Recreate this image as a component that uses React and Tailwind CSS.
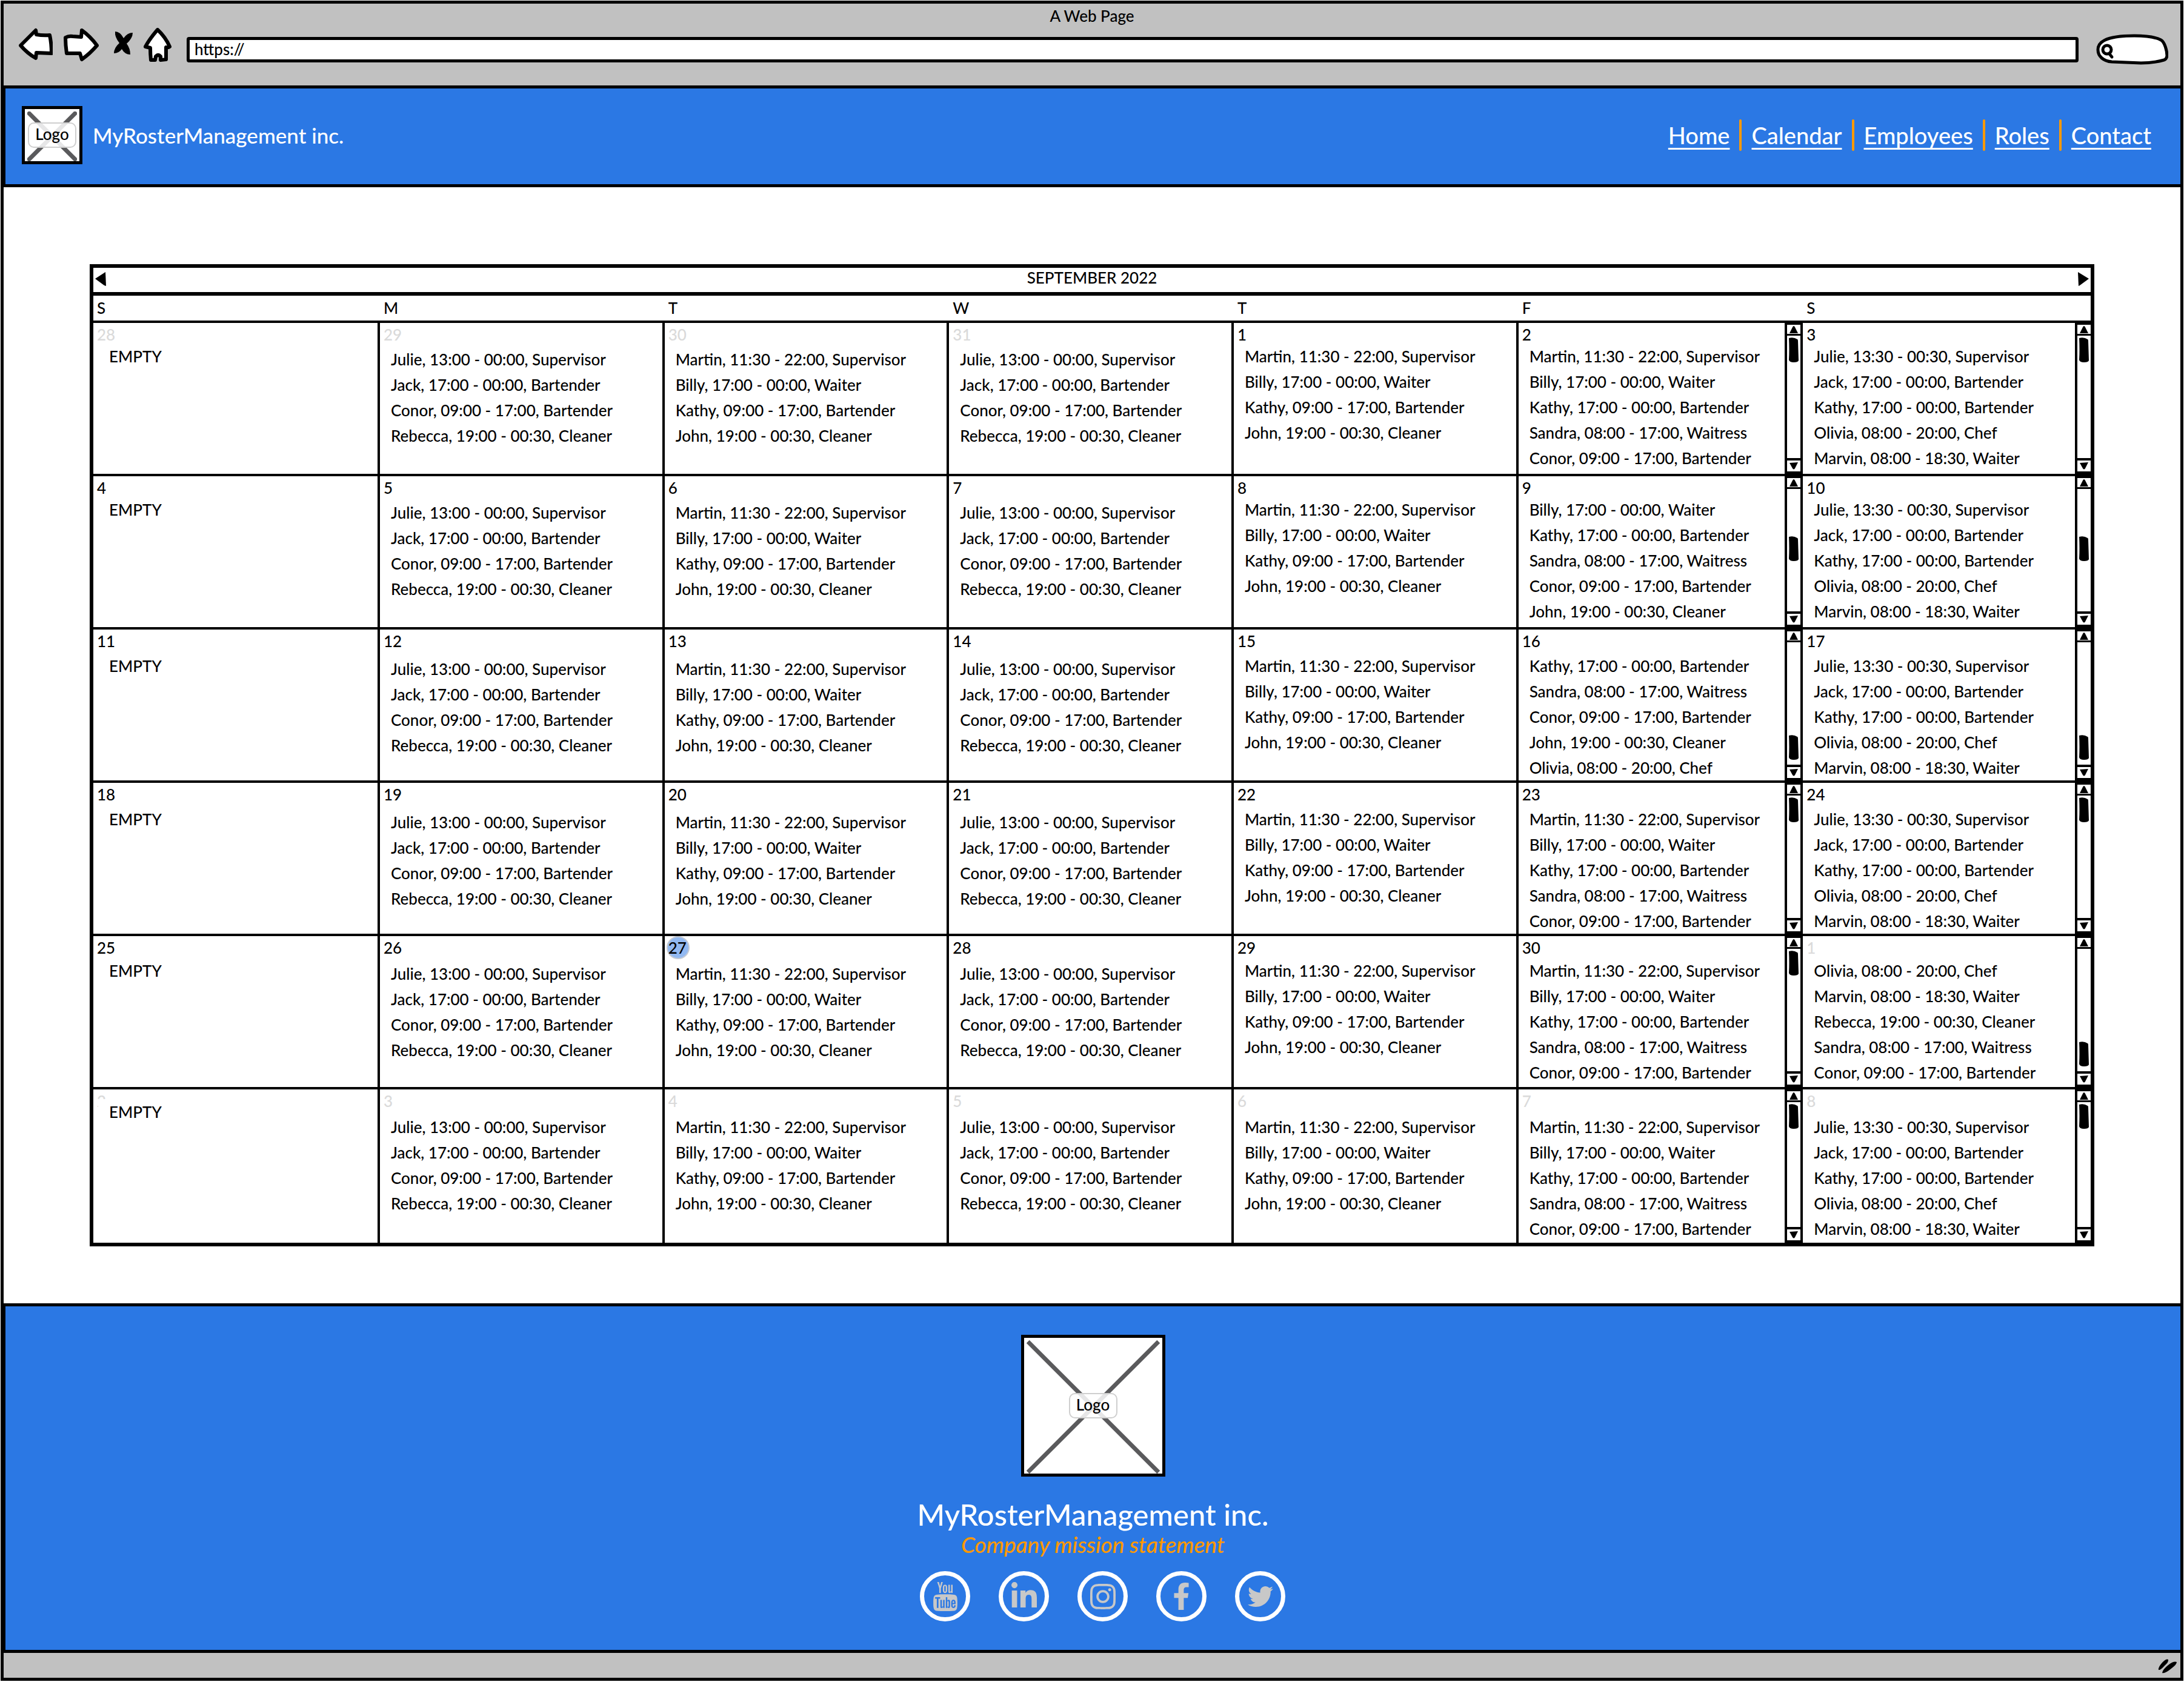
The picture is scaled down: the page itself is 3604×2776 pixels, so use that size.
import { FaFacebookF, FaInstagram, FaLinkedinIn, FaTwitter } from "react-icons/fa";
import { TfiYoutube } from "react-icons/tfi";

const JULIE_EARLY = "Julie, 13:00 - 00:00, Supervisor";
const JULIE_LATE = "Julie, 13:30 - 00:30, Supervisor";
const JACK = "Jack, 17:00 - 00:00, Bartender";
const CONOR = "Conor, 09:00 - 17:00, Bartender";
const REBECCA = "Rebecca, 19:00 - 00:30, Cleaner";
const MARTIN = "Martin, 11:30 - 22:00, Supervisor";
const BILLY = "Billy, 17:00 - 00:00, Waiter";
const KATHY_DAY = "Kathy, 09:00 - 17:00, Bartender";
const KATHY_NIGHT = "Kathy, 17:00 - 00:00, Bartender";
const JOHN = "John, 19:00 - 00:30, Cleaner";
const SANDRA = "Sandra, 08:00 - 17:00, Waitress";
const OLIVIA = "Olivia, 08:00 - 20:00, Chef";
const MARVIN = "Marvin, 08:00 - 18:30, Waiter";

const TEAM_A = [JULIE_EARLY, JACK, CONOR, REBECCA];
const TEAM_B = [MARTIN, BILLY, KATHY_DAY, JOHN];
const FRIDAY = [MARTIN, BILLY, KATHY_NIGHT, SANDRA, CONOR];
const SATURDAY = [JULIE_LATE, JACK, KATHY_NIGHT, OLIVIA, MARVIN];

const week = (days, muted, friday, fridayThumb, saturday, saturdayThumb) =>
  [
    { shifts: null },
    { shifts: TEAM_A, low: true },
    { shifts: TEAM_B, low: true },
    { shifts: TEAM_A, low: true },
    { shifts: TEAM_B },
    { shifts: friday, thumb: fridayThumb },
    { shifts: saturday, thumb: saturdayThumb },
  ].map((d, i) => ({ ...d, n: days[i], muted: muted.includes(i) }));

const WEEKS = [
  { pad: "mt-[34px]", days: week([28, 29, 30, 31, 1, 2, 3], [0, 1, 2, 3], FRIDAY, "start", SATURDAY, "start") },
  {
    pad: "mt-[34px]",
    days: week([4, 5, 6, 7, 8, 9, 10], [], [BILLY, KATHY_NIGHT, SANDRA, CONOR, JOHN], "middle", SATURDAY, "middle"),
  },
  {
    pad: "mt-[39px]",
    days: week([11, 12, 13, 14, 15, 16, 17], [], [KATHY_NIGHT, SANDRA, CONOR, JOHN, OLIVIA], "end", SATURDAY, "end"),
  },
  { pad: "mt-[39px]", days: week([18, 19, 20, 21, 22, 23, 24], [], FRIDAY, "start", SATURDAY, "start") },
  {
    pad: "mt-[36px]",
    days: week([25, 26, 27, 28, 29, 30, 1], [6], FRIDAY, "start", [OLIVIA, MARVIN, REBECCA, SANDRA, CONOR], "end"),
  },
  {
    pad: "mt-[41px]",
    emptyPad: "mt-4",
    level: true,
    days: week([2, 3, 4, 5, 6, 7, 8], [0, 1, 2, 3, 4, 5, 6], FRIDAY, "start", SATURDAY, "start"),
  },
];

const THUMB = { start: "justify-start", middle: "justify-center", end: "justify-end" };

function Scrollbar({ thumb }) {
  return (
    <div className="flex w-[26px] shrink-0 flex-col border-l-4 border-black">
      <button type="button" aria-label="Scroll up" className="flex h-[21px] items-center justify-center border-y-3 border-black">
        <svg viewBox="0 0 16 12" className="h-3 w-4">
          <path d="M8 0 Q9 0 10 2 L15 12 L1 12 L6 2 Q7 0 8 0Z" />
        </svg>
      </button>
      <div className={`flex grow flex-col items-center pt-[3px] pb-2 ${THUMB[thumb]}`}>
        <svg viewBox="0 0 16 41" className="h-[41px] w-4">
          <path d="M0 1 Q8 -1 14 3 Q15 3 15 6 L16 38 Q15 41 8 41 Q1 41 0 37 Q1 20 0 1Z" />
        </svg>
      </div>
      <button type="button" aria-label="Scroll down" className="flex h-[26px] items-center justify-center border-y-4 border-black">
        <svg viewBox="0 0 16 12" className="h-3 w-4">
          <path d="M1 1 L15 0 L10 10 Q8 13 6 10Z" />
        </svg>
      </button>
    </div>
  );
}

function Day({ day, week }) {
  return (
    <td className="border-r-4 border-b-4 border-black p-0 align-top group-last:border-b-0 last:border-r-0">
      <div className="flex min-h-[249px] justify-between group-last:min-h-[253px]">
        <div className="relative grow">
          <div className={`absolute top-1 left-[6px] leading-[30px] ${day.muted ? "text-[#dadada]" : ""}`}>
            {day.n === 27 && (
              <span className="absolute -top-1 -left-[3px] size-[38px] rounded-full border-2 border-[#c4cad4] bg-[#92b9f1]" />
            )}
            <span className="relative">{day.n}</span>
          </div>
          {day.shifts ? (
            <ul className={`relative pl-[18px] whitespace-nowrap ${week.pad}`}>
              {day.low && !week.level && <li aria-hidden="true" className="h-[5px]" />}
              {day.shifts.map((s) => (
                <li key={s} className="leading-[42px]">
                  {s}
                </li>
              ))}
            </ul>
          ) : (
            <p className={`relative ml-2 w-32 bg-white pl-[18px] leading-[42px] ${week.emptyPad ?? week.pad}`}>EMPTY</p>
          )}
        </div>
        {day.thumb && <Scrollbar thumb={day.thumb} />}
      </div>
    </td>
  );
}

function Calendar() {
  return (
    <section className="mx-[142px] border-6 border-black bg-white">
      <div className="flex h-[46px] items-center justify-between border-b-6 border-black px-[3px] pb-1">
        <button type="button" aria-label="Previous month">
          <svg viewBox="0 0 18 23" className="h-[23px] w-[18px]">
            <path d="M0 11 L17 0 L18 23 L15 22Z" />
          </svg>
        </button>
        <h2 className="pb-1 font-medium">SEPTEMBER 2022</h2>
        <button type="button" aria-label="Next month">
          <svg viewBox="0 0 18 23" className="h-[23px] w-[18px]">
            <path d="M18 11 L0 0 L1 23 L3 22Z" />
          </svg>
        </button>
      </div>
      <table className="w-full table-fixed border-separate border-spacing-0">
        <colgroup>
          <col className="w-[14.35%]" />
          <col className="w-[14.25%]" />
          <col className="w-[14.25%]" />
          <col className="w-[14.25%]" />
          <col className="w-[14.25%]" />
          <col className="w-[14.25%]" />
          <col />
        </colgroup>
        <thead>
          <tr>
            {["S", "M", "T", "W", "T", "F", "S"].map((d, i) => (
              <th key={i} scope="col" className="h-[45px] border-b-4 border-black pt-0 pb-[2px] pl-[6px] text-left font-medium">
                {d}
              </th>
            ))}
          </tr>
        </thead>
        <tbody>
          {WEEKS.map((w, i) => (
            <tr key={i} className="group">
              {w.days.map((d, j) => (
                <Day key={j} day={d} week={w} />
              ))}
            </tr>
          ))}
        </tbody>
      </table>
    </section>
  );
}

function Logo({ className }) {
  return (
    <div className={`relative flex items-center justify-center border-5 border-black bg-white ${className}`}>
      <svg viewBox="0 0 100 100" preserveAspectRatio="none" className="absolute inset-1 text-[#5a5a5c]">
        <path d="M1 1 L99 99 M99 1 L1 99" stroke="currentColor" strokeWidth="7" vectorEffect="non-scaling-stroke" />
      </svg>
      <span className="relative flex h-[42px] w-20 items-center justify-center rounded-[10px] border-2 border-[#cfcfcf] bg-white/85 pb-1">
        Logo
      </span>
    </div>
  );
}

function BrowserBar() {
  return (
    <header className="border-b-5 border-black bg-[#c1c1c1]">
      <p className="h-10 text-center leading-[40px]">A Web Page</p>
      <div className="flex h-[95px] items-start pr-[20px] pl-[25px]">
        <div className="flex gap-[18px]">
          <button type="button" aria-label="Back">
            <svg viewBox="0 0 56 56" className="size-14" fill="white" stroke="black" strokeWidth="6" strokeLinejoin="round">
              <path d="M3 29 L28 4 L29 11 Q40 13 51 12 Q54 26 54 42 L29 41 L28 50 Q14 42 3 29Z" />
            </svg>
          </button>
          <button type="button" aria-label="Forward">
            <svg viewBox="0 0 58 56" className="h-14 w-[58px]" fill="white" stroke="black" strokeWidth="6" strokeLinejoin="round">
              <path d="M3 16 Q8 13 15 14 L29 15 L30 4 Q44 14 55 29 Q44 42 30 52 L27 42 L5 42 Q3 28 3 16Z" />
            </svg>
          </button>
          <button type="button" aria-label="Stop">
            <svg viewBox="0 0 38 56" className="h-14 w-[38px]">
              <path d="M9 6 Q17 6 23 17 Q29 8 38 8 Q38 17 28 26 Q34 34 34 44 Q25 44 20 35 Q15 42 7 42 Q7 33 16 25 Q8 15 9 6Z" />
            </svg>
          </button>
          <button type="button" aria-label="Home">
            <svg viewBox="0 0 46 56" className="h-14 w-[46px]" fill="white" stroke="black" strokeWidth="6" strokeLinejoin="round">
              <path d="M23 3 Q36 15 43 31 Q40 33 37 32 L37 52 L28 53 L28 47 Q24 43 20 47 L19 53 L12 53 Q11 43 11 33 Q7 32 3 31 Q10 18 23 3Z" />
            </svg>
          </button>
        </div>
        <input
          aria-label="Address"
          defaultValue="https://"
          className="mt-[15px] ml-[25px] h-[42px] grow rounded-[4px] border-5 border-black bg-white px-[8px] pb-[3px] font-medium outline-none"
        />
        <div className="relative ml-[29px] h-16 w-[119px]">
          <svg viewBox="0 0 119 64" className="absolute inset-0" fill="none" stroke="black" strokeWidth="5" strokeLinecap="round">
            <path
              fill="white"
              d="M26 56 C12 55 3 47 3 36 C3 25 12 13 63 13 Q94 13 107 20 C113 23 117 38 117 46 Q116 52 112 53 Q94 58 74 58 Q50 57 26 56Z"
            />
            <circle cx="18" cy="36" r="7" />
            <path d="M22 43 L26 48" />
          </svg>
          <input aria-label="Search" className="absolute inset-x-8 top-4 h-10 w-20 bg-transparent outline-none" />
        </div>
      </div>
    </header>
  );
}

function SiteHeader() {
  return (
    <header className="flex h-[163px] items-center justify-between border-b-5 border-l-3 border-black bg-[#2b78e4] pr-[48px] pb-1 pl-[27px] text-white">
      <div className="flex items-center gap-[17px]">
        <Logo className="h-[96px] w-[100px] text-black" />
        <span className="text-[35px]">MyRosterManagement inc.</span>
      </div>
      <nav className="flex items-center text-[38px] leading-[52px]">
        {["Home", "Calendar", "Employees", "Roles", "Contact"].map((l, i) => (
          <div key={l} className="flex items-center">
            {i > 0 && <span className="mx-4 h-[52px] w-1 rounded-full bg-[#ff9900]" />}
            <a href="#" className="underline decoration-3 underline-offset-6">
              {l}
            </a>
          </div>
        ))}
      </nav>
    </header>
  );
}

const SOCIAL = [
  { name: "YouTube", icon: <TfiYoutube size={48} /> },
  { name: "LinkedIn", icon: <FaLinkedinIn size={48} /> },
  { name: "Instagram", icon: <FaInstagram size={48} /> },
  { name: "Facebook", icon: <FaFacebookF size={45} /> },
  { name: "Twitter", icon: <FaTwitter size={42} /> },
];

function SiteFooter() {
  return (
    <footer className="flex flex-col items-center border-y-5 border-l-3 border-black bg-[#2b78e4] pt-[47px] pb-[47px] text-white">
      <Logo className="h-[234px] w-[238px] text-black" />
      <p className="mt-[34px] text-[49px] leading-[56px]">MyRosterManagement inc.</p>
      <p className="text-[37px] leading-[44px] text-[#ff9900] italic">Company mission statement</p>
      <div className="mt-[22px] ml-[32px] flex gap-[47px]">
        {SOCIAL.map((s) => (
          <a
            key={s.name}
            href="#"
            aria-label={s.name}
            className="flex size-[83px] items-center justify-center rounded-full border-7 border-white text-[#c8c8c8]"
          >
            {s.icon}
          </a>
        ))}
      </div>
    </footer>
  );
}

export default function App() {
  return (
    <div className="flex min-h-screen flex-col bg-white p-px pb-[2px] font-['Lato',sans-serif] text-[26px] leading-[32px] font-medium text-black">
      <div className="flex grow flex-col border-5 border-black">
        <BrowserBar />
        <SiteHeader />
        <main className="grow pt-[127px] pb-[90px]">
          <Calendar />
        </main>
        <SiteFooter />
        <div className="flex h-[41px] items-center justify-end bg-[#c1c1c1] pr-1">
          <svg viewBox="0 0 34 28" className="h-7 w-[34px]">
            <path d="M2 21 Q1 17 8 9 Q15 2 18 4 Q19 8 12 14 Q5 22 2 21Z M8 26 Q9 20 18 13 Q27 6 32 8 Q32 12 24 18 Q12 28 8 26Z" />
          </svg>
        </div>
      </div>
    </div>
  );
}
